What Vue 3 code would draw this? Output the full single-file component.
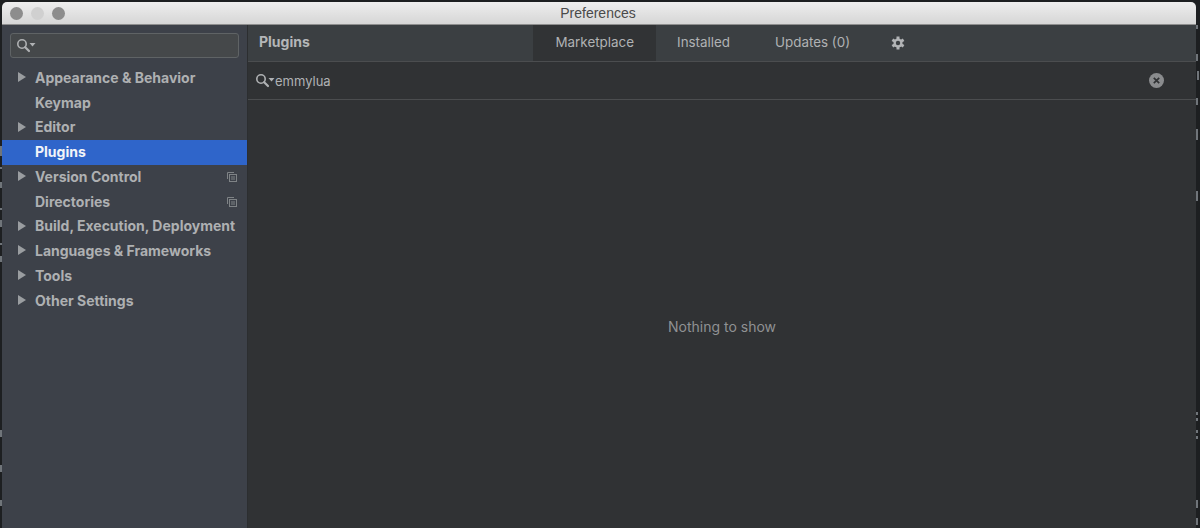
<script setup>
const items = [
  { label: 'Appearance & Behavior', arrow: true },
  { label: 'Keymap' },
  { label: 'Editor', arrow: true },
  { label: 'Plugins', active: true },
  { label: 'Version Control', arrow: true, copy: true },
  { label: 'Directories', copy: true },
  { label: 'Build, Execution, Deployment', arrow: true },
  { label: 'Languages & Frameworks', arrow: true },
  { label: 'Tools', arrow: true },
  { label: 'Other Settings', arrow: true },
]
const tabs = [
  { label: 'Marketplace', active: true },
  { label: 'Installed' },
  { label: 'Updates (0)' },
]
const specks = [
  { x: 1196, y: 25, h: 4 }, { x: 1196, y: 54, h: 7 }, { x: 1197, y: 71, h: 9 }, { x: 1196, y: 98, h: 7 },
  { x: 1196, y: 129, h: 11 }, { x: 1196, y: 191, h: 10 }, { x: 1196, y: 412, h: 3 }, { x: 1196, y: 418, h: 3 },
  { x: 1196, y: 430, h: 3 }, { x: 1196, y: 436, h: 3 }, { x: 1196, y: 500, h: 8 }, { x: 1196, y: 518, h: 7 },
  { x: 0, y: 146, h: 10 }, { x: 0, y: 167, h: 2 }, { x: 0, y: 182, h: 6 }, { x: 0, y: 208, h: 2 },
  { x: 0, y: 220, h: 7 }, { x: 0, y: 243, h: 2 }, { x: 0, y: 256, h: 6 }, { x: 0, y: 430, h: 7 },
  { x: 0, y: 465, h: 7 }, { x: 0, y: 500, h: 6 },
]
</script>

<template>
  <div class="screen">
    <i v-for="s in specks" :key="s.x + '-' + s.y" class="speck" :style="{ left: s.x + 'px', top: s.y + 'px', height: s.h + 'px' }"></i>
    <div class="window">
      <header class="titlebar">
        <div class="lights">
          <span class="light"></span>
          <span class="light pale"></span>
          <span class="light"></span>
        </div>
        <span class="title">Preferences</span>
      </header>
      <div class="body">
        <aside class="sidebar">
          <div class="side-search">
            <svg width="20" height="15" viewBox="0 0 20 15">
              <circle cx="6" cy="6" r="4.2" fill="none" stroke="#afb1b3" stroke-width="1.6" />
              <path d="M9.2 9.200l3.800 3.800" stroke="#afb1b3" stroke-width="2.200" stroke-linecap="round" />
              <path d="M13.500 5h6l-3 3.500z" fill="#afb1b3" />
            </svg>
          </div>
          <ul class="tree">
            <li v-for="item in items" :key="item.label" class="row" :class="{ active: item.active }">
              <svg v-if="item.arrow" class="arrow" width="8" height="10" viewBox="0 0 8 10">
                <path d="M0 0l8 5-8 5z" fill="#9a9da0" />
              </svg>
              <span class="label">{{ item.label }}</span>
              <svg v-if="item.copy" class="copy" width="10" height="10" viewBox="0 0 10 10">
                <path d="M.5 7V.5H7" fill="none" stroke="#7f8386" />
                <rect x="2.500" y="2.500" width="7" height="7" fill="none" stroke="#7f8386" />
                <path d="M4 5h4M4 7h4" stroke="#7f8386" />
              </svg>
            </li>
          </ul>
        </aside>
        <main class="content">
          <div class="topbar">
            <strong class="heading">Plugins</strong>
            <nav class="tabs">
              <span v-for="tab in tabs" :key="tab.label" class="tab" :class="{ on: tab.active }">{{ tab.label }}</span>
              <svg class="gear" width="14" height="14" viewBox="0 0 14 14">
                <g stroke="#b2b4b6" stroke-width="3">
                  <path d="M7 .5v13" />
                  <path d="M1.400 3.750l11.200 6.500" />
                  <path d="M1.400 10.250l11.200-6.500" />
                </g>
                <circle cx="7" cy="7" r="4.500" fill="#b2b4b6" />
                <circle cx="7" cy="7" r="2.200" fill="#3b3f42" />
              </svg>
            </nav>
          </div>
          <div class="filter">
            <svg class="filter-icon" width="20" height="15" viewBox="0 0 20 15">
              <circle cx="6" cy="6" r="4.200" fill="none" stroke="#afb1b3" stroke-width="1.600" />
              <path d="M9.200 9.200l3.800 3.800" stroke="#afb1b3" stroke-width="2.200" stroke-linecap="round" />
              <path d="M13.500 5h6l-3 3.500z" fill="#afb1b3" />
            </svg>
            <span class="query">emmylua</span>
            <svg class="clear" width="15" height="15" viewBox="0 0 15 15">
              <circle cx="7.500" cy="7.500" r="7.500" fill="#8a8c8e" />
              <path d="M4.800 4.800l5.400 5.400M10.200 4.800l-5.400 5.400" stroke="#303234" stroke-width="1.700" />
            </svg>
          </div>
          <div class="empty">Nothing to show</div>
        </main>
      </div>
    </div>
  </div>
</template>

<style>
html, body { margin: 0; background: #1d1f21; }
</style>

<style scoped>
.screen {
  position: relative;
  box-sizing: border-box;
  width: 1200px;
  height: 528px;
  padding: 2px 4px 0 2px;
  background: #1d1f21;
  overflow: hidden;
  font-family: Inter, "Liberation Sans", sans-serif;
}
.speck {
  position: absolute;
  width: 2px;
  background: #70757a;
}
.window {
  display: flex;
  flex-direction: column;
  height: 100%;
  border-radius: 5px 5px 0 0;
  overflow: hidden;
}
.titlebar {
  position: relative;
  display: flex;
  align-items: center;
  justify-content: center;
  flex: none;
  height: 22px;
  background: linear-gradient(#eeeeee, #d6d6d6);
  border-bottom: 1px solid #8e8e8e;
}
.lights {
  position: absolute;
  left: 8px;
  top: 5px;
  display: flex;
  gap: 8px;
}
.light {
  width: 13px;
  height: 13px;
  border-radius: 50%;
  background: #8d8d8d;
}
.light.pale { background: #d0d0d0; }
.title {
  font-size: 14px;
  color: #4a4a4a;
  margin-right: 2px;
  font-family: "Liberation Sans", sans-serif;
}
.body {
  display: flex;
  flex: 1;
  min-height: 0;
}
.sidebar {
  flex: none;
  width: 245px;
  background: #3d4149;
  border-right: 1px solid #2c2e30;
}
.side-search {
  display: flex;
  align-items: center;
  box-sizing: border-box;
  height: 25px;
  margin: 8px 8px 0;
  padding-left: 5px;
  background: #45484a;
  border: 1px solid #5f6365;
  border-radius: 3px;
}
.tree {
  list-style: none;
  margin: 7.500px 0 0;
  padding: 0;
}
.row {
  position: relative;
  display: flex;
  align-items: center;
  box-sizing: border-box;
  height: 24.750px;
  padding: 0 0 1px 33px;
  font-size: 14px;
  font-weight: 700;
  color: #aeb0b2;
  white-space: nowrap;
}
.row.active {
  background: #2f65ca;
  color: #f2f4f8;
}
.arrow {
  position: absolute;
  left: 16px;
  top: 6.500px;
}
.copy {
  position: absolute;
  right: 10px;
  top: 7.500px;
}
.content {
  display: flex;
  flex-direction: column;
  flex: 1;
  min-width: 0;
  background: #303234;
}
.topbar {
  position: relative;
  display: flex;
  align-items: center;
  flex: none;
  box-sizing: border-box;
  height: 37px;
  padding: 0 0 4px 11px;
  background: #3b3f42;
  border-bottom: 1px solid #4b4d4f;
}
.heading {
  font-size: 14px;
  font-weight: 700;
  color: #b4b6b8;
}
.tabs {
  position: absolute;
  left: 285px;
  top: 0;
  display: flex;
  align-items: center;
  height: 36px;
}
.tab {
  display: flex;
  align-items: center;
  box-sizing: border-box;
  height: 36px;
  padding: 0 22.500px 3px;
  font-size: 13.400px;
  color: #b0b2b4;
}
.tab.on { background: #313335; padding: 0 22px 3px 22.500px; margin-right: -1.500px; }
.gear { margin: 0 0 0 18px; }
.filter {
  display: flex;
  align-items: center;
  flex: none;
  box-sizing: border-box;
  height: 38px;
  padding: 0 32px 0 7px;
  border-bottom: 1px solid #4b4d4f;
}
.filter-icon { flex: none; }
.query {
  flex: 1;
  font-size: 13px;
  color: #b0b2b4;
}
.clear { flex: none; }
.empty {
  flex: 1;
  display: flex;
  align-items: center;
  justify-content: center;
  padding-top: 24px;
  font-size: 14px;
  color: #8f9193;
}
</style>
